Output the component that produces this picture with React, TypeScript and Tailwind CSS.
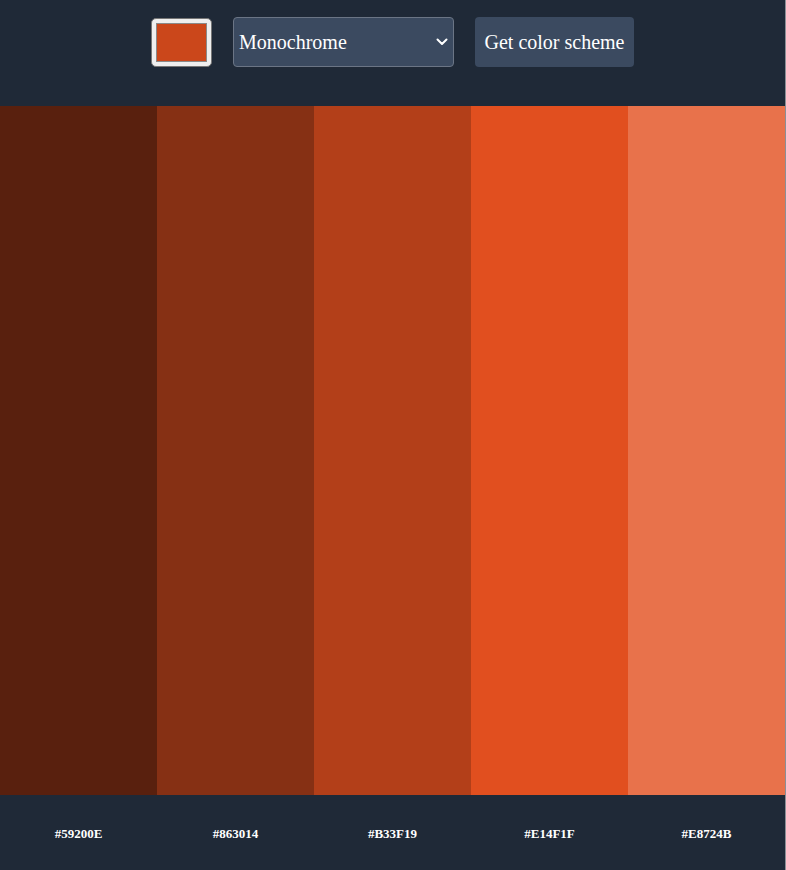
import React from "react";

const colors = ["#59200E", "#863014", "#B33F19", "#E14F1F", "#E8724B"];

export default function App() {
  return (
    <div
      className="w-[786px] h-[870px] flex flex-col bg-[#1f2937] border-r border-[#8a8f96]"
      style={{ fontFamily: '"Liberation Serif", "Times New Roman", serif' }}
    >
      <div className="h-[106px] flex items-start justify-center gap-[21px] pt-[17px]">
        <div className="mt-[1px] w-[61px] h-[49px] rounded-[5px] bg-[#efefef] border border-[#767676] p-[4px]">
          <div className="w-full h-full bg-[#CB471B] border border-[#8a8a8a]" />
        </div>
        <div className="relative w-[221px] h-[50px] rounded-[4px] bg-[#3b4a60] border border-[#6b7585] flex items-center pl-[5px] text-white text-[20px]">
          Monochrome
          <svg
            className="absolute right-[5px] top-1/2 -translate-y-1/2"
            width="12"
            height="8"
            viewBox="0 0 12 8"
            fill="none"
          >
            <path d="M1.5 1.5 L6 6 L10.5 1.5" stroke="white" strokeWidth="2" strokeLinecap="round" strokeLinejoin="round" />
          </svg>
        </div>
        <div className="w-[159px] h-[50px] rounded-[4px] bg-[#3b4a60] flex items-center justify-center text-white text-[20px]">
          Get color scheme
        </div>
      </div>
      <div className="flex-1 grid grid-cols-5">
        {colors.map((c) => (
          <div key={c} style={{ backgroundColor: c }} />
        ))}
      </div>
      <div className="h-[75px] grid grid-cols-5">
        {colors.map((c) => (
          <div key={c} className="flex items-center justify-center text-white font-bold text-[13px] pt-[2px]">
            {c}
          </div>
        ))}
      </div>
    </div>
  );
}
